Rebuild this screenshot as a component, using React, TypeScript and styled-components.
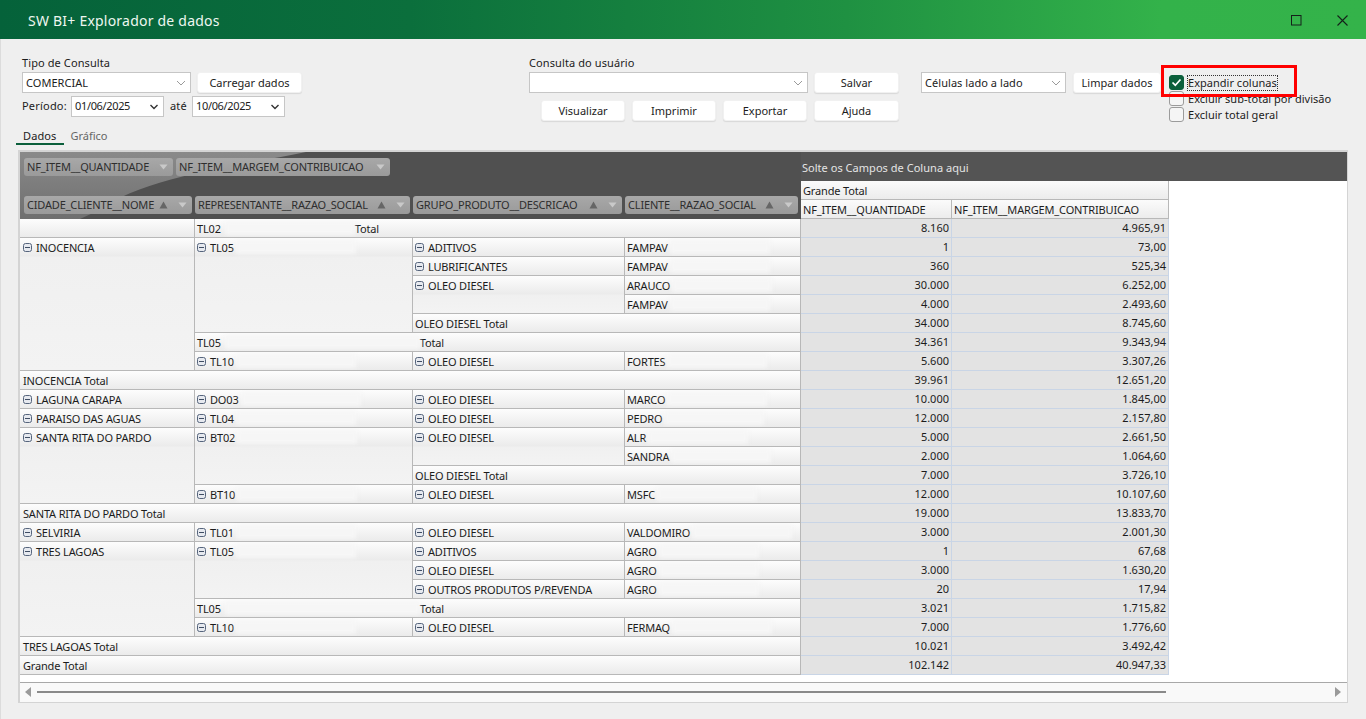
import React from "react";
import styled, { createGlobalStyle } from "styled-components";

const Global = createGlobalStyle`
  html, body { margin: 0; padding: 0; height: 719px; overflow: hidden; background: #efefef; }
  body { font-family: "Noto Sans", "Open Sans", sans-serif; font-size: 11px; color: #1c1c1c; }
  * { box-sizing: border-box; }
`;

const Page = styled.div`
  position: relative;
  width: 1366px;
  height: 719px;
  display: flex;
  flex-direction: column;
  border-left: 1px solid #dcdcdc;
`;

const TitleBar = styled.header`
  height: 39px;
  margin-left: -1px;
  flex: none;
  display: flex;
  align-items: center;
  padding: 1px 18px 0 28px;
  background: linear-gradient(90deg, #05623a 0%, #0b6f3c 30%, #1f9142 62%, #33b24a 85%, #34b34a 100%);
  color: #eef7f0;
  font-size: 14px;
  letter-spacing: 0.22px;
`;

const TitleText = styled.span`
  flex: 1;
`;

const WinButtons = styled.div`
  display: flex;
  align-items: center;
  gap: 35px;
`;

const Toolbar = styled.section`
  flex: none;
  height: 89px;
  padding: 16px 0 0 21px;
  display: grid;
  grid-template-columns: 507px 392px 1fr;
`;

const Group = styled.div`
  display: flex;
  flex-direction: column;
`;

const Label = styled.label`
  height: 17px;
  line-height: 15px;
  letter-spacing: 0.1px;
`;

const Line = styled.div<{ $top?: number }>`
  display: flex;
  align-items: center;
  margin-top: ${(p) => p.$top ?? 0}px;
`;

const Combo = styled.div<{ $w: number }>`
  width: ${(p) => p.$w}px;
  height: 21px;
  flex: none;
  display: flex;
  align-items: center;
  justify-content: space-between;
  padding: 0 4px 0 3px;
  background: #fff;
  border: 1px solid #c6c6c6;
  letter-spacing: 0.05px;
`;

const DateText = styled.span`
  letter-spacing: -0.35px;
  padding-bottom: 2px;
`;

const Btn = styled.button<{ $w: number; $ml?: number }>`
  width: ${(p) => p.$w}px;
  height: 21px;
  margin-left: ${(p) => p.$ml ?? 0}px;
  flex: none;
  padding: 0;
  background: #fff;
  border: 1px solid #f1f1f1;
  border-radius: 3px;
  box-shadow: 0 1px 1px #d8d8d8;
  font: inherit;
  letter-spacing: 0;
  color: #1c1c1c;
`;

const Caption = styled.span<{ $ml: number; $w: number }>`
  margin-left: ${(p) => p.$ml}px;
  letter-spacing: 0.2px;
  width: ${(p) => p.$w}px;
  flex: none;
  padding-bottom: 2px;
`;

const ChecksColumn = styled.div`
  position: absolute;
  left: 1168px;
  top: 75px;
  display: flex;
  flex-direction: column;
  gap: 1px;
`;

const CheckRow = styled.div`
  height: 15px;
  display: flex;
  align-items: center;
  gap: 4px;
  letter-spacing: 0.02px;
`;

const CheckBox = styled.span<{ $on?: boolean }>`
  width: 15px;
  height: 15px;
  flex: none;
  display: flex;
  align-items: center;
  justify-content: center;
  border-radius: 3px;
  border: 1px solid ${(p) => (p.$on ? "#0b5f3b" : "#9b9b9b")};
  background: ${(p) => (p.$on ? "#0b5f3b" : "#f5f5f5")};
`;

const Focused = styled.span`
  outline: 1px dotted #333;
  outline-offset: 0;
  line-height: 14px;
`;

const RedFrame = styled.div`
  position: absolute;
  left: 1160px;
  top: 65px;
  width: 136px;
  height: 32px;
  border: 3px solid #f00;
  pointer-events: none;
`;

const Tabs = styled.nav`
  flex: none;
  height: 17px;
  margin-left: 15px;
  display: flex;
  align-items: flex-start;
`;

const Tab = styled.div<{ $active?: boolean }>`
  height: 17px;
  line-height: 15px;
  padding: ${(p) => (p.$active ? "0 8px 0 7px" : "0 6px")};
  letter-spacing: ${(p) => (p.$active ? "0.1px" : "0")};
  color: ${(p) => (p.$active ? "#222" : "#666")};
  border-bottom: ${(p) => (p.$active ? "2px solid #0b5f3b" : "none")};
`;

const Frame = styled.section`
  width: 1330px;
  height: 553px;
  margin: 5px 0 0 17px;
  flex: none;
  display: flex;
  flex-direction: column;
  background: #fff;
  border: 2px solid #d4d4d4;
  border-width: 2px 1px 1px 2px;
`;

const Pivot = styled.div`
  flex: 1;
  display: grid;
  align-content: start;
  grid-template-columns: 175px 218px 212px 176px 151px 217px 1fr;
  grid-template-rows: 29px 19px 19px repeat(24, 19px);
`;

const FieldArea = styled.div`
  position: relative;
  grid-column: 1 / span 4;
  grid-row: 1 / span 3;
  overflow: hidden;
  background: #505050;
  display: flex;
  flex-direction: column;
  justify-content: space-between;
  padding: 6px 0 5px 4px;

  &::before {
    content: "";
    position: absolute;
    inset: 0;
    background: linear-gradient(180deg, #8a8a8a, #6f6f6f);
    clip-path: path("M0 0 L286 0 C220 14 130 22 75 60 L60 67 L0 67 Z");
  }
`;

const ChipRow = styled.div`
  position: relative;
  display: flex;
  gap: 3px;
`;

const Chip = styled.div<{ $w: number }>`
  width: ${(p) => p.$w}px;
  height: 18px;
  flex: none;
  display: flex;
  align-items: center;
  padding: 0 5px 0 3px;
  border-radius: 3px;
  background: linear-gradient(#a8a8a8, #9a9a9a);
  color: #2e2e2e;
  letter-spacing: -0.17px;
  white-space: nowrap;
`;

const ChipText = styled.span`
  flex: 1;
  padding-bottom: 2px;
`;

const ChipIcons = styled.span`
  display: flex;
  align-items: center;
  gap: 10px;
`;

const DropZone = styled.div`
  grid-column: 5 / span 3;
  grid-row: 1;
  background: #545454;
  color: #e4e4e4;
  display: flex;
  align-items: center;
  padding: 1px 0 0 1px;
  letter-spacing: 0.03px;
`;

const ColHead = styled.div<{ $c: number; $cs: number; $r: number }>`
  grid-column: ${(p) => p.$c} / span ${(p) => p.$cs};
  grid-row: ${(p) => p.$r};
  display: flex;
  align-items: center;
  padding-left: 2px;
  letter-spacing: -0.15px;
  background: linear-gradient(#fbfbfb, #ececec);
  border-right: 1px solid #b8b8b8;
  border-bottom: 1px solid #b8b8b8;
`;

const Cell = styled.div<{ $c: number; $cs: number; $r: number; $rs: number }>`
  grid-column: ${(p) => p.$c} / span ${(p) => p.$cs};
  grid-row: ${(p) => p.$r + 4} / span ${(p) => p.$rs};
  display: flex;
  align-items: flex-start;
  padding: 2px 0 0 ${(p) => (p.$c === 1 ? 3 : 2)}px;
  line-height: 16px;
  overflow: hidden;
  white-space: nowrap;
  letter-spacing: -0.17px;
  background: linear-gradient(#fdfdfd 0, #ebebeb 18px, #f0f0f0 19px, #f3f3f3 100%);
  border-right: 1px solid #b8b8b8;
  border-bottom: 1px solid #b8b8b8;
`;

const Blot = styled.span<{ $w: number; $ml?: number }>`
  width: ${(p) => p.$w}px;
  height: 14px;
  flex: none;
  margin-left: ${(p) => p.$ml ?? 2}px;
  background: #f6f6f6;
  filter: blur(2px);
`;

const Gap = styled.span<{ $w: number }>`
  width: ${(p) => p.$w}px;
  flex: none;
`;

const Expander = styled.svg`
  flex: none;
  margin: 3px 4px 0 0;
`;

const Num = styled.div<{ $c: number; $r: number }>`
  grid-column: ${(p) => p.$c};
  grid-row: ${(p) => p.$r + 4};
  display: flex;
  align-items: center;
  justify-content: flex-end;
  padding: 0 2px 1px 0;
  background: #e3e3e3;
  border-right: 1px solid #c9d5e6;
  border-bottom: 1px solid #c9d5e6;
  letter-spacing: 0;
`;

const Scrollbar = styled.div`
  height: 20px;
  flex: none;
  display: flex;
  align-items: center;
  padding: 0 3px 2px 4px;
  background: #f9f9f9;
  border-top: 1px solid #a8a8a8;
`;

const ScrollTrack = styled.div`
  width: 1129px;
  height: 2px;
  margin: 0 168px 0 5px;
  background: #8a8a8a;
`;

const Chevron = ({ dark }: { dark?: boolean }) => (
  <svg width="10" height="6" viewBox="0 0 10 6" fill="none">
    <path
      d={dark ? "M1.5 1 L5 4.5 L8.5 1" : "M1 1 L5 5 L9 1"}
      stroke={dark ? "#333" : "#9a9a9a"}
      strokeWidth={dark ? 1.4 : 1}
    />
  </svg>
);

const Minus = () => (
  <Expander width="9" height="9" viewBox="0 0 9 9">
    <rect x="0.5" y="0.5" width="8" height="8" rx="2" fill="#e6e9ef" stroke="#56657d" />
    <path d="M2 4.5 H7" stroke="#3f4d63" strokeWidth="1" />
  </Expander>
);

const Up = () => (
  <svg width="9" height="8" viewBox="0 0 9 8">
    <path d="M4.5 0.5 L8.5 7.5 H0.5 Z" fill="#666" />
  </svg>
);

const Down = () => (
  <svg width="9" height="6" viewBox="0 0 9 6">
    <path d="M0.5 0.5 H8.5 L4.5 5.5 Z" fill="#c9c9c9" />
  </svg>
);

type C = {
  c: number;
  cs?: number;
  r: number;
  rs?: number;
  t: string;
  x?: boolean;
  blot?: number;
  total?: number;
};

const city = (r: number, t: string, rs = 1): C => ({ c: 1, r, rs, t, x: true });
const rep = (r: number, t: string, rs = 1, blot = 120): C => ({ c: 2, r, rs, t, x: true, blot });
const grp = (r: number, t: string, rs = 1): C => ({ c: 3, r, rs, t, x: true });
const cli = (r: number, t: string, blot = 100): C => ({ c: 4, r, t, blot });

const cells: C[] = [
  { c: 1, r: 0, t: "" },
  { c: 2, cs: 3, r: 0, t: "TL02", blot: 130, total: 158 },
  city(1, "INOCENCIA", 7),
  rep(1, "TL05", 5, 120),
  grp(1, "ADITIVOS"), cli(1, "FAMPAV"),
  grp(2, "LUBRIFICANTES"), cli(2, "FAMPAV"),
  grp(3, "OLEO DIESEL", 2), cli(3, "ARAUCO"), cli(4, "FAMPAV"),
  { c: 3, cs: 2, r: 5, t: "OLEO DIESEL Total" },
  { c: 2, cs: 3, r: 6, t: "TL05", blot: 195, total: 225 },
  rep(7, "TL10"), grp(7, "OLEO DIESEL"), cli(7, "FORTES"),
  { c: 1, cs: 4, r: 8, t: "INOCENCIA Total" },
  city(9, "LAGUNA CARAPA"), rep(9, "DO03"), grp(9, "OLEO DIESEL"), cli(9, "MARCO"),
  city(10, "PARAISO DAS AGUAS"), rep(10, "TL04"), grp(10, "OLEO DIESEL"), cli(10, "PEDRO"),
  city(11, "SANTA RITA DO PARDO", 4),
  rep(11, "BT02", 3), grp(11, "OLEO DIESEL", 2), cli(11, "ALR"), cli(12, "SANDRA"),
  { c: 3, cs: 2, r: 13, t: "OLEO DIESEL Total" },
  rep(14, "BT10"), grp(14, "OLEO DIESEL"), cli(14, "MSFC"),
  { c: 1, cs: 4, r: 15, t: "SANTA RITA DO PARDO Total" },
  city(16, "SELVIRIA"), rep(16, "TL01"), grp(16, "OLEO DIESEL"), cli(16, "VALDOMIRO"),
  city(17, "TRES LAGOAS", 5),
  rep(17, "TL05", 3),
  grp(17, "ADITIVOS"), cli(17, "AGRO"),
  grp(18, "OLEO DIESEL"), cli(18, "AGRO"),
  grp(19, "OUTROS PRODUTOS P/REVENDA"), cli(19, "AGRO"),
  { c: 2, cs: 3, r: 20, t: "TL05", blot: 195, total: 225 },
  rep(21, "TL10"), grp(21, "OLEO DIESEL"), cli(21, "FERMAQ"),
  { c: 1, cs: 4, r: 22, t: "TRES LAGOAS Total" },
  { c: 1, cs: 4, r: 23, t: "Grande Total" },
];

const values: [string, string][] = [
  ["8.160", "4.965,91"], ["1", "73,00"], ["360", "525,34"], ["30.000", "6.252,00"],
  ["4.000", "2.493,60"], ["34.000", "8.745,60"], ["34.361", "9.343,94"], ["5.600", "3.307,26"],
  ["39.961", "12.651,20"], ["10.000", "1.845,00"], ["12.000", "2.157,80"], ["5.000", "2.661,50"],
  ["2.000", "1.064,60"], ["7.000", "3.726,10"], ["12.000", "10.107,60"], ["19.000", "13.833,70"],
  ["3.000", "2.001,30"], ["1", "67,68"], ["3.000", "1.630,20"], ["20", "17,94"],
  ["3.021", "1.715,82"], ["7.000", "1.776,60"], ["10.021", "3.492,42"], ["102.142", "40.947,33"],
];

const rowChips: [string, number][] = [
  ["CIDADE_CLIENTE__NOME", 168],
  ["REPRESENTANTE__RAZAO_SOCIAL", 215],
  ["GRUPO_PRODUTO__DESCRICAO", 209],
  ["CLIENTE__RAZAO_SOCIAL", 173],
];

export default function App() {
  return (
    <>
      <Global />
      <Page>
        <TitleBar>
          <TitleText>SW BI+ Explorador de dados</TitleText>
          <WinButtons>
            <svg width="11" height="11" viewBox="0 0 11 11" fill="none">
              <rect x="0.5" y="0.5" width="9.5" height="9.5" stroke="#14201a" />
            </svg>
            <svg width="11" height="11" viewBox="0 0 11 11" fill="none">
              <path d="M0.5 0.5 L10.5 10.5 M10.5 0.5 L0.5 10.5" stroke="#14201a" strokeWidth="1.1" />
            </svg>
          </WinButtons>
        </TitleBar>

        <Toolbar>
          <Group>
            <Label>Tipo de Consulta</Label>
            <Line>
              <Combo $w={169}>COMERCIAL<Chevron /></Combo>
              <Btn $w={105} $ml={6}>Carregar dados</Btn>
            </Line>
            <Line $top={3}>
              <Caption $ml={0} $w={49}>Período:</Caption>
              <Combo $w={93}><DateText>01/06/2025</DateText><Chevron dark /></Combo>
              <Caption $ml={6} $w={22}>até</Caption>
              <Combo $w={93}><DateText>10/06/2025</DateText><Chevron dark /></Combo>
            </Line>
          </Group>

          <Group>
            <Label>Consulta do usuário</Label>
            <Line>
              <Combo $w={279}><span /><Chevron /></Combo>
              <Btn $w={85} $ml={6}>Salvar</Btn>
            </Line>
            <Line $top={7}>
              <Btn $w={84} $ml={12}>Visualizar</Btn>
              <Btn $w={84} $ml={7}>Imprimir</Btn>
              <Btn $w={84} $ml={7}>Exportar</Btn>
              <Btn $w={85} $ml={7}>Ajuda</Btn>
            </Line>
          </Group>

          <Group>
            <Label />
            <Line>
              <Combo $w={145}>Células lado a lado<Chevron /></Combo>
              <Btn $w={88} $ml={7}>Limpar dados</Btn>
            </Line>
          </Group>
        </Toolbar>

        <ChecksColumn>
          <CheckRow>
            <CheckBox $on>
              <svg width="11" height="9" viewBox="0 0 11 9" fill="none">
                <path d="M1.5 4.5 L4.3 7.2 L9.5 1.5" stroke="#fff" strokeWidth="1.7" />
              </svg>
            </CheckBox>
            <Focused>Expandir colunas</Focused>
          </CheckRow>
          <CheckRow><CheckBox />Excluir sub-total por divisão</CheckRow>
          <CheckRow><CheckBox />Excluir total geral</CheckRow>
        </ChecksColumn>
        <RedFrame />

        <Tabs>
          <Tab $active>Dados</Tab>
          <Tab>Gráfico</Tab>
        </Tabs>

        <Frame>
          <Pivot>
            <FieldArea>
              <ChipRow>
                <Chip $w={149}>
                  <ChipText>NF_ITEM__QUANTIDADE</ChipText>
                  <Down />
                </Chip>
                <Chip $w={214}>
                  <ChipText>NF_ITEM__MARGEM_CONTRIBUICAO</ChipText>
                  <Down />
                </Chip>
              </ChipRow>
              <ChipRow>
                {rowChips.map(([t, w]) => (
                  <Chip key={t} $w={w}>
                    <ChipText>{t}</ChipText>
                    <ChipIcons><Up /><Down /></ChipIcons>
                  </Chip>
                ))}
              </ChipRow>
            </FieldArea>
            <DropZone>Solte os Campos de Coluna aqui</DropZone>
            <ColHead $c={5} $cs={2} $r={2}>Grande Total</ColHead>
            <ColHead $c={5} $cs={1} $r={3}>NF_ITEM__QUANTIDADE</ColHead>
            <ColHead $c={6} $cs={1} $r={3}>NF_ITEM__MARGEM_CONTRIBUICAO</ColHead>

            {cells.map((k, i) => (
              <Cell key={i} $c={k.c} $cs={k.cs ?? 1} $r={k.r} $rs={k.rs ?? 1}>
                {k.x && <Minus />}
                {k.t}
                {k.total ? (
                  <>
                    <Blot $w={k.blot ?? 0} $ml={4} />
                    <Gap $w={k.total - (k.blot ?? 0) - 30} />
                    Total
                  </>
                ) : (
                  k.blot ? <Blot $w={k.blot} /> : null
                )}
              </Cell>
            ))}

            {values.map(([a, b], i) => (
              <React.Fragment key={i}>
                <Num $c={5} $r={i}>{a}</Num>
                <Num $c={6} $r={i}>{b}</Num>
              </React.Fragment>
            ))}
          </Pivot>
          <Scrollbar>
            <svg width="8" height="10" viewBox="0 0 8 10"><path d="M7 0 V10 L1 5 Z" fill="#9a9a9a" /></svg>
            <ScrollTrack />
            <svg width="8" height="10" viewBox="0 0 8 10"><path d="M1 0 V10 L7 5 Z" fill="#9a9a9a" /></svg>
          </Scrollbar>
        </Frame>
      </Page>
    </>
  );
}
